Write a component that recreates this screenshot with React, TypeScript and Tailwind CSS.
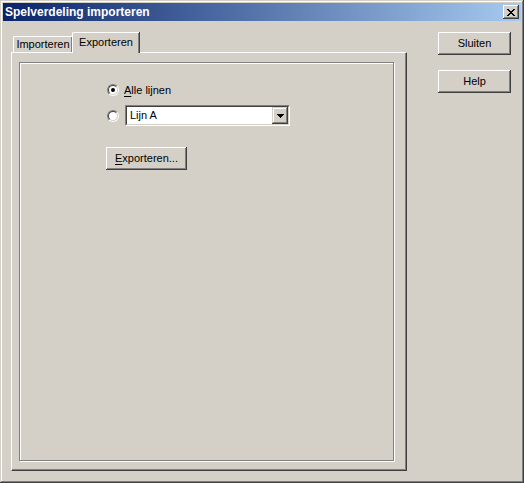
import React from "react";

const font = { fontFamily: '"Liberation Sans", Arial, sans-serif' };

function Radio({ checked }: { checked?: boolean }) {
  return (
    <div className="w-[12px] h-[12px] rounded-full border border-t-[#808080] border-l-[#808080] border-b-white border-r-white shrink-0">
      <div className="w-full h-full rounded-full border border-t-[#404040] border-l-[#404040] border-b-[#d4d0c8] border-r-[#d4d0c8] bg-white flex items-center justify-center">
        {checked && <div className="w-[4px] h-[4px] rounded-full bg-black" />}
      </div>
    </div>
  );
}

function Button({ children, className = "" }: { children: React.ReactNode; className?: string }) {
  return (
    <div
      className={`h-[23px] bg-[#d4d0c8] flex items-center justify-center text-black shadow-[inset_-1px_-1px_#404040,inset_1px_1px_#ffffff,inset_-2px_-2px_#808080,inset_2px_2px_#d4d0c8] ${className}`}
    >
      {children}
    </div>
  );
}

export default function App() {
  return (
    <div
      className="w-[524px] h-[483px] bg-[#d4d0c8] p-[3px] text-[11px] text-black shadow-[inset_-1px_-1px_#404040,inset_1px_1px_#d4d0c8,inset_-2px_-2px_#808080,inset_2px_2px_#ffffff] flex flex-col"
      style={font}
    >
      {/* Title bar */}
      <div className="h-[18px] bg-[linear-gradient(to_right,#0a246a,#a6caf0)] flex items-center pl-[2px] pr-[2px]">
        <span className="text-white font-bold text-[12px] leading-none">Spelverdeling importeren</span>
        <div className="ml-auto w-[16px] h-[14px] bg-[#d4d0c8] flex items-center justify-center shadow-[inset_-1px_-1px_#404040,inset_1px_1px_#ffffff,inset_-2px_-2px_#808080,inset_2px_2px_#d4d0c8]">
          <svg width="8" height="7" viewBox="0 0 8 7" shapeRendering="crispEdges">
            <path d="M0 0h2v1h-2zM6 0h2v1h-2zM1 1h2v1h-2zM5 1h2v1h-2zM2 2h4v1h-4zM3 3h2v1h-2zM2 4h4v1h-4zM1 5h2v1h-2zM5 5h2v1h-2zM0 6h2v1h-2zM6 6h2v1h-2z" fill="#000" />
          </svg>
        </div>
      </div>

      {/* Body */}
      <div className="flex pt-[11px] pl-[8px]">
        {/* Tabs + panel */}
        <div className="w-[396px] flex flex-col">
          <div className="h-[20px] flex items-end pl-[2px]">
            <div className="w-[59px] h-[16px] border-l border-t border-white rounded-tl-[2px] shadow-[inset_-1px_0_#808080,1px_0_#404040] flex items-center justify-center">
              Importeren
            </div>
            <div className="relative z-10 w-[67px] h-[21px] mb-[-1px] bg-[#d4d0c8] border-l border-t border-white rounded-tl-[2px] shadow-[inset_-1px_0_#808080,1px_0_#404040] flex items-center justify-center pb-[2px]">
              Exporteren
            </div>
          </div>
          <div className="h-[419px] border-l border-t border-white border-r border-b border-r-[#404040] border-b-[#404040] shadow-[inset_-1px_-1px_#808080] pl-[7px] pt-[9px]">
            <div className="w-[375px] h-[399px] border border-[#808080] shadow-[1px_1px_0_#ffffff,inset_1px_1px_0_#ffffff] pl-[87px] pt-[21px] flex flex-col">
              <div className="flex items-center h-[12px]">
                <Radio checked />
                <span className="ml-[5px]">
                  <span className="underline underline-offset-2">A</span>lle lijnen
                </span>
              </div>
              <div className="flex items-center mt-[9px] h-[21px]">
                <Radio />
                <div className="ml-[6px] w-[165px] h-[21px] bg-white border border-t-[#808080] border-l-[#808080] border-b-white border-r-white">
                  <div className="w-full h-full border border-t-[#404040] border-l-[#404040] border-b-[#d4d0c8] border-r-[#d4d0c8] flex items-center">
                    <span className="pl-[3px]">Lijn A</span>
                    <div className="ml-auto w-[16px] h-full bg-[#d4d0c8] flex items-center justify-center shadow-[inset_-1px_-1px_#404040,inset_1px_1px_#d4d0c8,inset_-2px_-2px_#808080,inset_2px_2px_#ffffff]">
                      <svg width="7" height="4" viewBox="0 0 7 4" shapeRendering="crispEdges">
                        <path d="M0 0h7v1h-7zM1 1h5v1h-5zM2 2h3v1h-3zM3 3h1v1h-1z" fill="#000" />
                      </svg>
                    </div>
                  </div>
                </div>
              </div>
              <Button className="w-[81px] mt-[21px] -ml-[1px]">
                <span>
                  <span className="underline underline-offset-2">E</span>xporteren...
                </span>
              </Button>
            </div>
          </div>
        </div>

        {/* Right buttons */}
        <div className="ml-[31px] flex flex-col gap-[15px]">
          <Button className="w-[73px]">Sluiten</Button>
          <Button className="w-[73px]">Help</Button>
        </div>
      </div>
    </div>
  );
}
